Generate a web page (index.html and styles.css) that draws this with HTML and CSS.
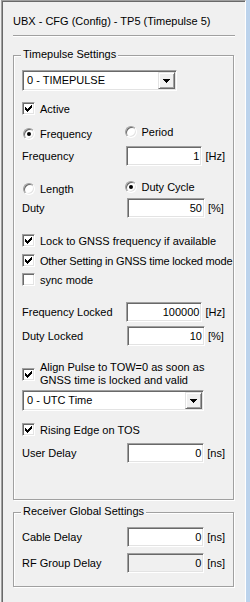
FILE: index.html
```html
<!DOCTYPE html>
<html lang="en">

<head>
    <meta charset="UTF-8">
    <meta name="viewport" content="width=device-width, initial-scale=1.0">
    <title>UBX - CFG - TP5</title>

    <!-- dialog look -->
    <link rel="stylesheet" href="styles.css">
</head>

<body>
    <div class="window">
        <div class="panel">

            <!-- message name -->
            <div class="title">UBX - CFG (Config) - TP5 (Timepulse 5)</div>
            <div class="sep"></div>

            <!-- timepulse settings -->
            <div class="group group-tp">
                <span class="legend">Timepulse Settings</span>

                <div class="combo combo-short mt9">
                    <span class="combo-text">0 - TIMEPULSE</span>
                    <span class="combo-btn"><svg width="7" height="4" viewBox="0 0 7 4"><path d="M0 0h7v1h-1v1h-1v1h-1v1h-1v-1h-1v-1h-1v-1h-1z" fill="#000"/></svg></span>
                </div>

                <div class="check mt11">
                    <span class="box"><svg width="7" height="7" viewBox="0 0 7 7"><path d="M0 2h1v1h1v1h1v-1h1v-1h1v-1h1v-1h1v3h-1v1h-1v1h-1v1h-1v1h-1v-1h-1v-1h-1z" fill="#000"/></svg></span>
                    <span>Active</span>
                </div>

                <div class="radios mt12">
                    <div class="radio"><span class="dot on"></span><span>Frequency</span></div>
                    <div class="radio up"><span class="dot"></span><span>Period</span></div>
                </div>

                <div class="field mt6">
                    <span class="field-label">Frequency</span>
                    <span class="edit">1</span>
                    <span class="unit">[Hz]</span>
                </div>

                <div class="radios mt16">
                    <div class="radio"><span class="dot"></span><span>Length</span></div>
                    <div class="radio up"><span class="dot on"></span><span>Duty Cycle</span></div>
                </div>

                <div class="field mt3">
                    <span class="field-label">Duty</span>
                    <span class="edit">50</span>
                    <span class="unit">[%]</span>
                </div>

                <div class="check mt16">
                    <span class="box"><svg width="7" height="7" viewBox="0 0 7 7"><path d="M0 2h1v1h1v1h1v-1h1v-1h1v-1h1v-1h1v3h-1v1h-1v1h-1v1h-1v1h-1v-1h-1v-1h-1z" fill="#000"/></svg></span>
                    <span>Lock to GNSS frequency if available</span>
                </div>
                <div class="check mt7">
                    <span class="box"><svg width="7" height="7" viewBox="0 0 7 7"><path d="M0 2h1v1h1v1h1v-1h1v-1h1v-1h1v-1h1v3h-1v1h-1v1h-1v1h-1v1h-1v-1h-1v-1h-1z" fill="#000"/></svg></span>
                    <span class="tight">Other Setting in GNSS time locked mode</span>
                </div>
                <div class="check mt6">
                    <span class="box"></span>
                    <span>sync mode</span>
                </div>

                <div class="field mt16">
                    <span class="field-label">Frequency Locked</span>
                    <span class="edit">100000</span>
                    <span class="unit">[Hz]</span>
                </div>
                <div class="field mt4">
                    <span class="field-label">Duty Locked</span>
                    <span class="edit">10</span>
                    <span class="unit">[%]</span>
                </div>

                <div class="check multi mt15">
                    <span class="box"><svg width="7" height="7" viewBox="0 0 7 7"><path d="M0 2h1v1h1v1h1v-1h1v-1h1v-1h1v-1h1v3h-1v1h-1v1h-1v1h-1v1h-1v-1h-1v-1h-1z" fill="#000"/></svg></span>
                    <span>Align Pulse to TOW=0 as soon as<br>GNSS time is locked and valid</span>
                </div>

                <div class="combo combo-long mt3">
                    <span class="combo-text">0 - UTC Time</span>
                    <span class="combo-btn"><svg width="7" height="4" viewBox="0 0 7 4"><path d="M0 0h7v1h-1v1h-1v1h-1v1h-1v-1h-1v-1h-1v-1h-1z" fill="#000"/></svg></span>
                </div>

                <div class="check mt12">
                    <span class="box"><svg width="7" height="7" viewBox="0 0 7 7"><path d="M0 2h1v1h1v1h1v-1h1v-1h1v-1h1v-1h1v3h-1v1h-1v1h-1v1h-1v1h-1v-1h-1v-1h-1z" fill="#000"/></svg></span>
                    <span>Rising Edge on TOS</span>
                </div>

                <div class="field mt7">
                    <span class="field-label">User Delay</span>
                    <span class="edit">0</span>
                    <span class="unit">[ns]</span>
                </div>
            </div>

            <!-- receiver settings -->
            <div class="group group-rx">
                <span class="legend">Receiver Global Settings</span>

                <div class="field mt9">
                    <span class="field-label">Cable Delay</span>
                    <span class="edit">0</span>
                    <span class="unit">[ns]</span>
                </div>
                <div class="field mt6">
                    <span class="field-label">RF Group Delay</span>
                    <span class="edit disabled">0</span>
                    <span class="unit">[ns]</span>
                </div>
            </div>

        </div>
        <div class="frame"></div>
    </div>
</body>

</html>
```

FILE: styles.css
```css
* {
    margin: 0;
    padding: 0;
    box-sizing: border-box;
}

body {
    background-color: #f0f0f0;
    font-family: "Liberation Sans", Arial, sans-serif;
    font-size: 11px;
    color: #000;
}

.window {
    display: flex;
    width: 250px;
    height: 602px;
}

.panel {
    width: 245px;
    margin-left: 1px;
    border-top: 1px solid #a0a0a0;
    border-left: 1px solid #a0a0a0;
    border-right: 1px solid #fff;
    box-shadow: inset 1px 1px 0 #696969;
    padding: 14px 11px 0;
}

.frame {
    width: 4px;
    background-color: #bcd3ec;
}

.title {
    line-height: 13px;
    white-space: nowrap;
}

.sep {
    margin-top: 7px;
    margin-right: -1px;
    border-top: 1px solid #a0a0a0;
    border-bottom: 1px solid #fff;
}

/* etched group boxes */
.group {
    display: flex;
    flex-direction: column;
    border: 1px solid #a0a0a0;
    box-shadow: 1px 1px 0 #fff, inset 1px 1px 0 #fff;
    padding: 0 8px;
}

.group-tp {
    margin-top: 18px;
    padding-bottom: 36px;
}

.group-rx {
    margin-top: 12px;
    padding-bottom: 13px;
}

.legend {
    align-self: flex-start;
    margin: -8px 0 0 -1px;
    padding: 0 2px;
    background-color: #f0f0f0;
    line-height: 13px;
}

.mt3 { margin-top: 3px; }
.mt4 { margin-top: 4px; }
.mt6 { margin-top: 6px; }
.mt7 { margin-top: 7px; }
.mt9 { margin-top: 9px; }
.mt11 { margin-top: 11px; }
.mt12 { margin-top: 12px; }
.mt15 { margin-top: 15px; }
.mt16 { margin-top: 16px; }

/* combo boxes */
.combo {
    display: flex;
    height: 21px;
    background-color: #fff;
    border: 1px solid;
    border-color: #a0a0a0 #fff #fff #a0a0a0;
    box-shadow: inset 1px 1px 0 #696969, inset -1px -1px 0 #e3e3e3;
}

.combo-short {
    width: 155px;
}

.combo-long {
    width: 182px;
}

.combo-text {
    flex: 1;
    padding-left: 4px;
    line-height: 19px;
    white-space: nowrap;
}

.combo-btn {
    display: flex;
    align-items: center;
    justify-content: center;
    width: 17px;
    margin: 1px 1px 1px 0;
    background-color: #f0f0f0;
    border: 1px solid;
    border-color: #e3e3e3 #696969 #696969 #e3e3e3;
    box-shadow: inset 1px 1px 0 #fff, inset -1px -1px 0 #a0a0a0;
}

/* check boxes */
.check {
    display: flex;
    align-items: center;
    gap: 5px;
    height: 13px;
    white-space: nowrap;
}

.check.multi {
    height: 26px;
    line-height: 13px;
}

.tight {
    letter-spacing: -0.2px;
}

.box {
    display: flex;
    flex-shrink: 0;
    align-items: center;
    justify-content: center;
    width: 13px;
    height: 13px;
    background-color: #fff;
    border: 1px solid;
    border-color: #a0a0a0 #fff #fff #a0a0a0;
    box-shadow: inset 1px 1px 0 #696969, inset -1px -1px 0 #e3e3e3;
}

/* radio buttons */
.radios {
    display: flex;
    height: 13px;
}

.radio {
    display: flex;
    align-items: center;
    gap: 5px;
    width: 105px;
    height: 13px;
    white-space: nowrap;
}

.radio.up {
    margin-top: -2px;
}

.dot {
    display: flex;
    align-items: center;
    justify-content: center;
    width: 12px;
    height: 12px;
    margin-left: 1px;
    border-radius: 50%;
    background-color: #fff;
    border: 1px solid;
    border-color: #a0a0a0 #fff #fff #a0a0a0;
    box-shadow: inset 1px 1px 0 #696969, inset -1px -1px 0 #e3e3e3;
}

.dot.on::after {
    content: "";
    width: 4px;
    height: 4px;
    border-radius: 50%;
    background-color: #000;
}

/* label + edit + unit */
.field {
    display: flex;
    align-items: center;
    height: 20px;
    white-space: nowrap;
}

.field-label {
    width: 105px;
}

.edit {
    width: 78px;
    height: 20px;
    padding-right: 2px;
    line-height: 18px;
    text-align: right;
    background-color: #fff;
    border: 1px solid;
    border-color: #a0a0a0 #fff #fff #a0a0a0;
    box-shadow: inset 1px 1px 0 #696969, inset -1px -1px 0 #e3e3e3;
}

.edit.disabled {
    background-color: #f0f0f0;
}

.unit {
    margin-left: 3px;
}
```
